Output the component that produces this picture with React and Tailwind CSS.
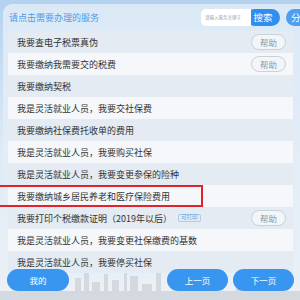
import React from "react";

const rows = [
  { t: "我要查电子税票真伪", help: true },
  { t: "我要缴纳我需要交的税费", help: true },
  { t: "我要缴纳契税" },
  { t: "我是灵活就业人员，我要交社保费" },
  { t: "我要缴纳社保费托收单的费用" },
  { t: "我是灵活就业人员，我要购买社保" },
  { t: "我是灵活就业人员，我要变更参保的险种" },
  { t: "我要缴纳城乡居民养老和医疗保险费用", mark: true },
  { t: "我要打印个税缴款证明（2019年以后）", help: true, tag: true },
  { t: "我是灵活就业人员，我要变更社保缴费的基数" },
  { t: "我是灵活就业人员，我要停买社保" },
];

function City() {
  return (
    <svg width="300" height="40" viewBox="0 0 300 40" className="block">
      <g fill="#9aa6b2" opacity="0.3">
        <rect x="0" y="31" width="300" height="9" />
        <rect x="75" y="18" width="6" height="22" />
        <rect x="84" y="10" width="5" height="30" />
        <rect x="92" y="22" width="8" height="18" />
        <rect x="104" y="14" width="4" height="26" />
        <rect x="112" y="20" width="7" height="20" />
        <rect x="124" y="6" width="3" height="34" />
        <rect x="130" y="16" width="8" height="24" />
        <rect x="142" y="24" width="10" height="16" />
        <rect x="156" y="12" width="5" height="28" />
        <rect x="200" y="26" width="12" height="14" />
        <rect x="236" y="22" width="8" height="18" />
        <rect x="250" y="28" width="20" height="12" />
        <rect x="20" y="26" width="10" height="14" />
        <rect x="40" y="22" width="6" height="18" />
      </g>
    </svg>
  );
}

export default function App() {
  return (
    <div
      className="relative w-[300px] h-[300px] overflow-hidden bg-gradient-to-b from-[#b3d2f0] via-[#dfeaf5] to-[#eef1f4]"
      style={{ fontFamily: '"Noto Sans CJK SC", "Noto Sans", sans-serif' }}
    >
      <div className="absolute left-0 bottom-0">
        <City />
      </div>
      <div className="ml-[3px] mt-[4px] w-[305px] h-[275px] rounded-tl-[9px] bg-gradient-to-b from-[#dbe9f7] to-[#e8f0f7] pl-[5px] pr-[12px]">
        <div className="h-[27px] flex items-center">
          <div className="pl-[1px] text-[9px] leading-none text-[#4d9be6]">请点击需要办理的服务</div>
          <div className="ml-auto flex items-center h-[17px] mr-[-28px]">
            <div className="relative h-[17px] w-[50px] bg-white rounded-l-[5px] flex items-center pl-[4px]">
              <span className="text-[4.5px] leading-none text-[#9aa4ae]">请输入服务关键字</span>
            </div>
            <div className="ml-[-5px] h-[17px] w-[34px] rounded-full bg-[#2f8ff0] flex items-center justify-center text-[9.5px] leading-none text-white">
              搜索
            </div>
            <div className="ml-[6px] h-[17px] w-[38px] rounded-full bg-[#4f9ff0] flex items-center pl-[5px] text-[9.5px] leading-none text-white">
              分类
            </div>
          </div>
        </div>
        <div className="flex flex-col w-[285px]">
          {rows.map((r, i) => (
            <div
              key={i}
              className={
                "relative h-[22px] flex items-center pl-[9px] pr-[7px] " +
                (i % 2 === 0 ? "bg-[#e4ebf2]" : "bg-[#f5f7fa]")
              }
            >
              <span className="text-[9px] leading-none text-[#333]">{r.t}</span>
              {r.tag && (
                <span className="ml-[6px] h-[8px] px-[2px] border border-[#a9cdf0] rounded-[2px] text-[5.5px] leading-none text-[#5aa2e6] flex items-center">
                  可打印
                </span>
              )}
              {r.help && (
                <span className="ml-auto h-[16px] w-[35px] rounded-full border border-[#c9d1d9] bg-[#f3f6f9] flex items-center justify-center text-[8.5px] leading-none text-[#8b97a3]">
                  帮助
                </span>
              )}
              {r.mark && (
                <div className="absolute left-[-12px] top-0 w-[207px] h-[22px] border-2 border-[#e3232c]" />
              )}
            </div>
          ))}
        </div>
      </div>
      <div className="absolute left-0 right-0 top-[269px] h-[22px] flex items-center pl-[7px] pr-[6px]">
        <div className="h-[22px] w-[62px] rounded-full bg-[#3996f0] flex items-center justify-center text-[8.5px] text-white">我的</div>
        <div className="ml-auto h-[22px] w-[61px] rounded-full bg-[#3996f0] flex items-center justify-center text-[8.5px] text-white">上一页</div>
        <div className="ml-[5px] h-[22px] w-[61px] rounded-full bg-[#3996f0] flex items-center justify-center text-[8.5px] text-white">下一页</div>
      </div>
    </div>
  );
}
